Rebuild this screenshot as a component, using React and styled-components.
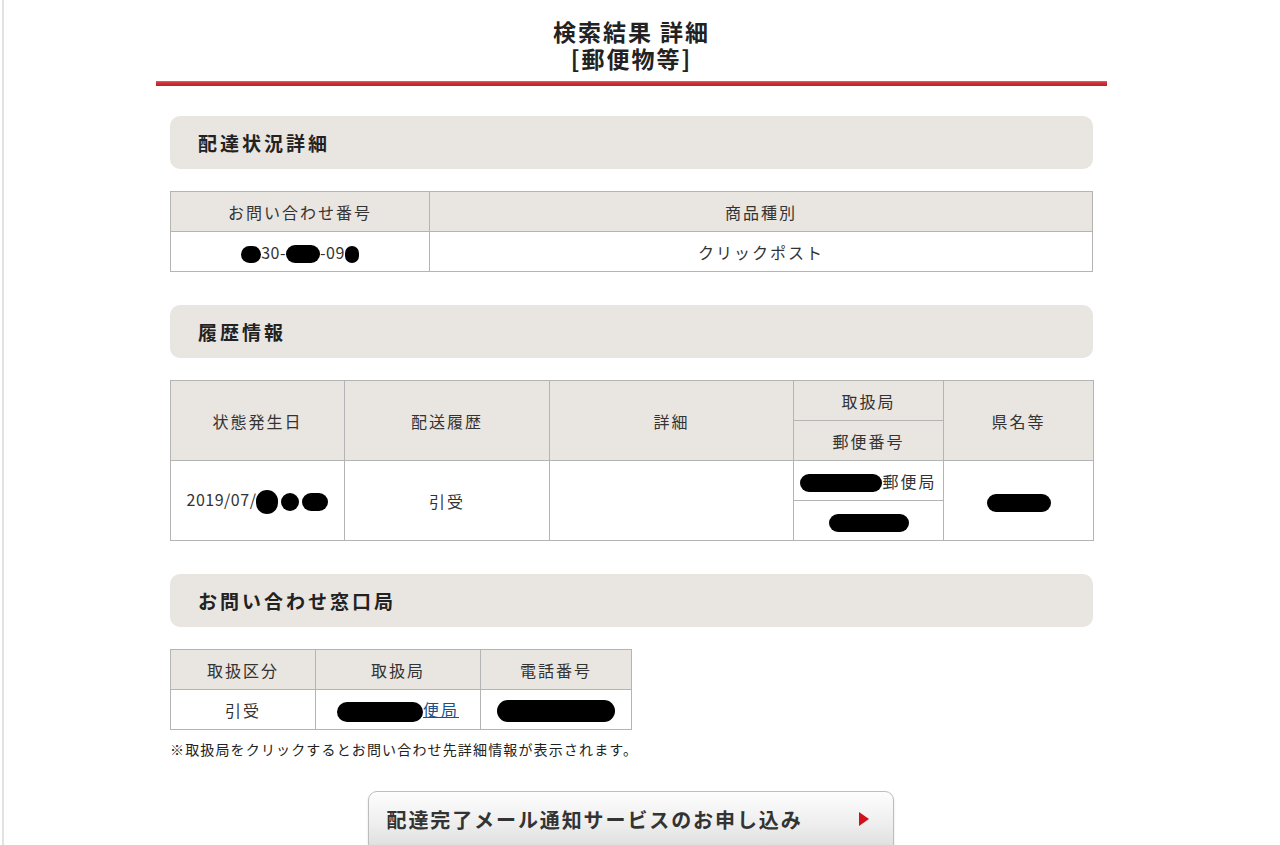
import React from 'react'
import styled, { createGlobalStyle } from 'styled-components'

const GlobalStyle = createGlobalStyle`
    html, body {
        margin: 0;
        padding: 0;
        background: #ffffff;
    }
    body {
        font-family: "Noto Sans CJK JP", "Noto Sans", sans-serif;
        color: #333333;
    }
`

const Frame = styled.div`
    margin-left: 2px;
    border-left: 2px solid #e2e2e2;
    padding-right: 21px;
    min-height: 845px;
    box-sizing: border-box;
`

const Content = styled.div`
    width: 951px;
    margin: 0 auto;
`

const PageTitle = styled.h1`
    margin: 0;
    padding-top: 18px;
    text-align: center;
    font-size: 23px;
    font-weight: 700;
    letter-spacing: 2px;
    color: #222222;
`

const TitleLine = styled.div`
    height: 27px;
    line-height: 27px;
    overflow: visible;
`

const RedRule = styled.div`
    margin-top: 9px;
    height: 5px;
    background: linear-gradient(#e06a6a 0%, #d0303a 35%, #c02028 100%);
`

const Inner = styled.div`
    padding: 0 14px;
`

const SectionHead = styled.h2`
    margin: ${(p) => p.$top}px 0 22px;
    height: 53px;
    display: flex;
    align-items: center;
    padding-left: 28px;
    background: #e9e5e1;
    border-radius: 10px;
    font-size: 19px;
    font-weight: 700;
    letter-spacing: 3px;
    color: #222222;
`

const Table = styled.table`
    border-collapse: collapse;
    width: ${(p) => p.$width}px;
    table-layout: fixed;
    font-size: 16px;
    letter-spacing: 2px;
    color: #333333;
`

const Th = styled.th`
    background: #e9e5e1;
    border: 1px solid #b4b4b4;
    font-weight: 400;
    height: 39px;
    padding: 0;
    text-align: center;
`

const Td = styled.td`
    border: 1px solid #b4b4b4;
    height: 39px;
    padding: 0;
    text-align: center;
    background: #ffffff;
    letter-spacing: ${(p) => (p.$digits ? 0.5 : 2)}px;
`

const Blot = styled.span`
    display: inline-block;
    vertical-align: middle;
    width: ${(p) => p.$w}px;
    height: ${(p) => p.$h || 18}px;
    margin: 0 ${(p) => p.$m || 0}px;
    background: #000000;
    border-radius: 999px;
`

const OfficeLink = styled.a`
    color: #1a4f8a;
    text-decoration: underline;
`

const Note = styled.p`
    margin: 9px 0 0;
    font-size: 14px;
    letter-spacing: 1.15px;
    color: #222222;
`

const ButtonRow = styled.div`
    display: flex;
    justify-content: center;
    margin-top: 32px;
    padding-right: 2px;
`

const MailButton = styled.button`
    width: 526px;
    height: 62px;
    display: flex;
    align-items: center;
    justify-content: space-between;
    padding: 0 18px 6px 18px;
    border: 1px solid #bdbdbd;
    border-radius: 9px;
    background: linear-gradient(#fdfdfd 0%, #efefef 50%, #dcdcdc 100%);
    box-shadow: 0 1px 2px rgba(0, 0, 0, 0.15);
    font-family: "Noto Sans CJK JP", sans-serif;
    font-size: 20px;
    font-weight: 700;
    letter-spacing: 1.9px;
    color: #333333;
    cursor: pointer;
`

const Arrow = styled.span`
    width: 0;
    height: 0;
    margin-right: 6px;
    border-top: 7px solid transparent;
    border-bottom: 7px solid transparent;
    border-left: 10px solid #d0121b;
`

function App() {
    return (
        <>
            <GlobalStyle />
            <Frame>
                <Content>
                    <PageTitle>
                        <TitleLine>検索結果 詳細</TitleLine>
                        <TitleLine>[郵便物等]</TitleLine>
                    </PageTitle>
                    <RedRule />
                    <Inner>
                        <SectionHead $top={30}>配達状況詳細</SectionHead>
                        <Table $width={923}>
                            <colgroup>
                                <col style={{ width: 259 }} />
                                <col />
                            </colgroup>
                            <thead>
                                <tr>
                                    <Th>お問い合わせ番号</Th>
                                    <Th>商品種別</Th>
                                </tr>
                            </thead>
                            <tbody>
                                <tr>
                                    <Td $digits>
                                        <Blot $w={20} $h={17} />
                                        30-
                                        <Blot $w={34} $h={18} />
                                        -09
                                        <Blot $w={14} $h={17} />
                                    </Td>
                                    <Td>クリックポスト</Td>
                                </tr>
                            </tbody>
                        </Table>

                        <SectionHead $top={33}>履歴情報</SectionHead>
                        <Table $width={923}>
                            <colgroup>
                                <col style={{ width: 174 }} />
                                <col style={{ width: 205 }} />
                                <col style={{ width: 244 }} />
                                <col style={{ width: 150 }} />
                                <col style={{ width: 150 }} />
                            </colgroup>
                            <thead>
                                <tr>
                                    <Th rowSpan={2}>状態発生日</Th>
                                    <Th rowSpan={2}>配送履歴</Th>
                                    <Th rowSpan={2}>詳細</Th>
                                    <Th>取扱局</Th>
                                    <Th rowSpan={2}>県名等</Th>
                                </tr>
                                <tr>
                                    <Th>郵便番号</Th>
                                </tr>
                            </thead>
                            <tbody>
                                <tr>
                                    <Td rowSpan={2} $digits>
                                        2019/07/
                                        <Blot $w={22} $h={24} />
                                        <Blot $w={18} $h={18} $m={3} />
                                        <Blot $w={26} $h={18} />
                                    </Td>
                                    <Td rowSpan={2}>引受</Td>
                                    <Td rowSpan={2}></Td>
                                    <Td>
                                        <Blot $w={82} $h={18} />
                                        郵便局
                                    </Td>
                                    <Td rowSpan={2}>
                                        <Blot $w={64} $h={18} />
                                    </Td>
                                </tr>
                                <tr>
                                    <Td>
                                        <Blot $w={80} $h={18} />
                                    </Td>
                                </tr>
                            </tbody>
                        </Table>

                        <SectionHead $top={33}>お問い合わせ窓口局</SectionHead>
                        <Table $width={461}>
                            <colgroup>
                                <col style={{ width: 145 }} />
                                <col style={{ width: 165 }} />
                                <col style={{ width: 151 }} />
                            </colgroup>
                            <thead>
                                <tr>
                                    <Th>取扱区分</Th>
                                    <Th>取扱局</Th>
                                    <Th>電話番号</Th>
                                </tr>
                            </thead>
                            <tbody>
                                <tr>
                                    <Td>引受</Td>
                                    <Td>
                                        <Blot $w={86} $h={20} />
                                        <OfficeLink href="#">便局</OfficeLink>
                                    </Td>
                                    <Td>
                                        <Blot $w={118} $h={22} />
                                    </Td>
                                </tr>
                            </tbody>
                        </Table>
                        <Note>
                            ※取扱局をクリックするとお問い合わせ先詳細情報が表示されます。
                        </Note>
                    </Inner>
                    <ButtonRow>
                        <MailButton type="button">
                            配達完了メール通知サービスのお申し込み
                            <Arrow />
                        </MailButton>
                    </ButtonRow>
                </Content>
            </Frame>
        </>
    )
}

export default App
